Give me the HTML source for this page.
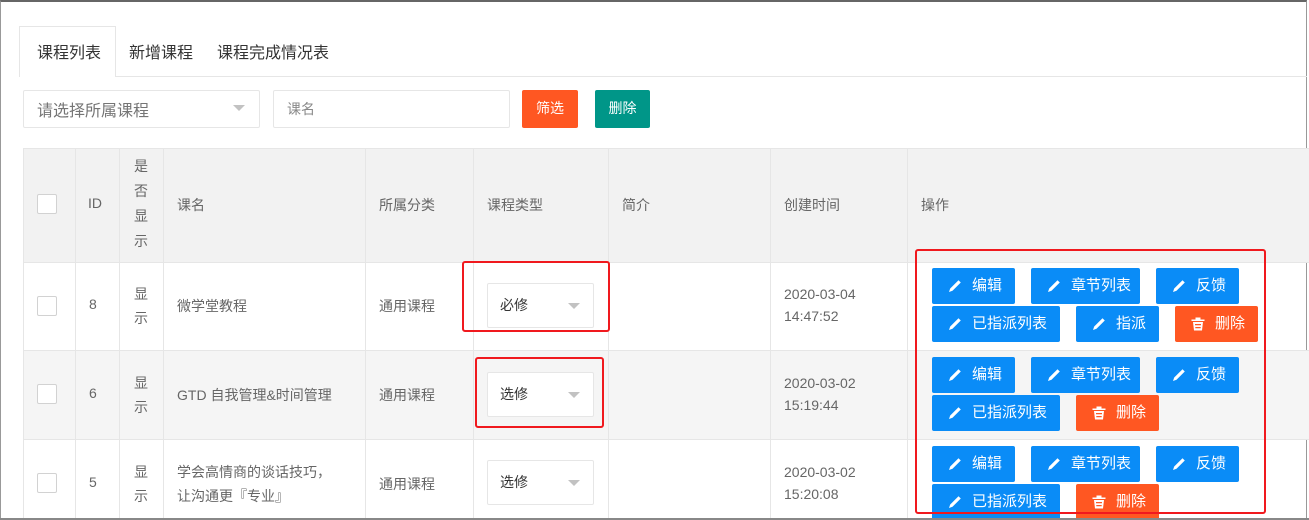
<!DOCTYPE html>
<html><head><meta charset="utf-8"><style>
*{margin:0;padding:0;box-sizing:border-box}
body{width:1309px;height:520px;overflow:hidden;background:#fff;font-family:"Liberation Sans","Noto Sans CJK SC",sans-serif;color:#666;font-size:14px;position:relative}
.a{position:absolute}
.frame{left:0;top:0;width:1307px;height:519px;border:1px solid #999;border-top:2px solid #666}
.t{position:absolute;white-space:nowrap}
.vl{position:absolute;width:1px;background:#e6e6e6}
.hl{position:absolute;height:1px;background:#e6e6e6}
.btn{position:absolute;height:36px;background:#0a8cf7;color:#fff;border-radius:2px;font-size:15px;line-height:36px;padding-left:40px;white-space:nowrap}
.btn.o{background:#ff5722}
.btn svg{position:absolute;left:15px;top:10px}
.sel{position:absolute;width:107px;height:45px;border:1px solid #e6e6e6;border-radius:2px;background:#fff;color:#333;line-height:43px;padding-left:12px}
.sel:after{content:"";position:absolute;right:13px;top:19px;border:6px solid transparent;border-top:6px solid #c2c2c2}
.cb{position:absolute;width:20px;height:20px;border:1px solid #d2d2d2;border-radius:2px;background:#fff}
.red{position:absolute;border:2px solid #f0191e;border-radius:3px}
</style></head><body>
<div class="a frame"></div>
<div class="hl" style="left:19px;top:76px;width:1288px"></div>
<div class="a" style="left:19px;top:26px;width:97px;height:51px;border:1px solid #e6e6e6;border-bottom:none;background:#fff"></div>
<div class="t" style="left:37px;top:39px;font-size:16px;color:#333">课程列表</div>
<div class="t" style="left:129px;top:39px;font-size:16px;color:#333">新增课程</div>
<div class="t" style="left:217px;top:39px;font-size:16px;color:#333">课程完成情况表</div>
<div class="a" style="left:23px;top:90px;width:237px;height:38px;border:1px solid #e6e6e6;border-radius:2px"></div>
<div class="t" style="left:37px;top:97px;font-size:16px;color:#757575">请选择所属课程</div>
<div class="a" style="left:233px;top:105px;border:6px solid transparent;border-top:6px solid #c2c2c2"></div>
<div class="a" style="left:273px;top:90px;width:237px;height:38px;border:1px solid #e6e6e6;border-radius:2px"></div>
<div class="t" style="left:287px;top:99px;color:#888">课名</div>
<div class="a" style="left:522px;top:90px;width:56px;height:38px;background:#ff5722;border-radius:2px;color:#fff;line-height:36px;text-align:center">筛选</div>
<div class="a" style="left:595px;top:90px;width:55px;height:38px;background:#009688;border-radius:2px;color:#fff;line-height:36px;text-align:center">删除</div>
<div class="a" style="left:23px;top:148px;width:1286px;height:114px;background:#f2f2f2"></div>
<div class="a" style="left:23px;top:350px;width:1286px;height:89px;background:#f5f5f5"></div>
<div class="hl" style="left:23px;top:148px;width:1286px"></div>
<div class="hl" style="left:23px;top:262px;width:1286px"></div>
<div class="hl" style="left:23px;top:350px;width:1286px"></div>
<div class="hl" style="left:23px;top:439px;width:1286px"></div>
<div class="vl" style="left:23px;top:148px;height:372px"></div>
<div class="vl" style="left:75px;top:148px;height:372px"></div>
<div class="vl" style="left:119px;top:148px;height:372px"></div>
<div class="vl" style="left:163px;top:148px;height:372px"></div>
<div class="vl" style="left:365px;top:148px;height:372px"></div>
<div class="vl" style="left:473px;top:148px;height:372px"></div>
<div class="vl" style="left:608px;top:148px;height:372px"></div>
<div class="vl" style="left:770px;top:148px;height:372px"></div>
<div class="vl" style="left:907px;top:148px;height:372px"></div>
<div class="cb" style="left:37px;top:194px"></div>
<div class="t" style="left:88px;top:195px">ID</div>
<div class="t" style="left:134px;top:154px;line-height:25px;white-space:normal;width:16px">是否显示</div>
<div class="t" style="left:177px;top:195px">课名</div>
<div class="t" style="left:379px;top:195px">所属分类</div>
<div class="t" style="left:487px;top:195px">课程类型</div>
<div class="t" style="left:622px;top:195px">简介</div>
<div class="t" style="left:784px;top:195px">创建时间</div>
<div class="t" style="left:921px;top:195px">操作</div>
<div class="cb" style="left:37px;top:296px"></div>
<div class="t" style="left:89px;top:296px">8</div>
<div class="t" style="left:134px;top:282px;line-height:24px;white-space:normal;width:16px">显示</div>
<div class="t" style="left:177px;top:296px">微学堂教程</div>
<div class="t" style="left:379px;top:296px">通用课程</div>
<div class="sel" style="left:487px;top:283px">必修</div>
<div class="t" style="left:784px;top:283px;line-height:22px">2020-03-04<br>14:47:52</div>
<div class="cb" style="left:37px;top:384px"></div>
<div class="t" style="left:89px;top:385px">6</div>
<div class="t" style="left:134px;top:371px;line-height:24px;white-space:normal;width:16px">显示</div>
<div class="t" style="left:177px;top:385px">GTD 自我管理&amp;时间管理</div>
<div class="t" style="left:379px;top:385px">通用课程</div>
<div class="sel" style="left:487px;top:372px">选修</div>
<div class="t" style="left:784px;top:372px;line-height:22px">2020-03-02<br>15:19:44</div>
<div class="cb" style="left:37px;top:473px"></div>
<div class="t" style="left:89px;top:474px">5</div>
<div class="t" style="left:134px;top:460px;line-height:24px;white-space:normal;width:16px">显示</div>
<div class="t" style="left:177px;top:460px;line-height:24px">学会高情商的谈话技巧，<br>让沟通更『专业』</div>
<div class="t" style="left:379px;top:474px">通用课程</div>
<div class="sel" style="left:487px;top:460px">选修</div>
<div class="t" style="left:784px;top:461px;line-height:22px">2020-03-02<br>15:20:08</div>
<svg width="0" height="0" style="position:absolute"><defs>
<symbol id="p" viewBox="0 0 16 16"><path d="M2 14 L3.2 10.5 L11.5 2.2 L13.8 4.5 L5.5 12.8 Z" fill="#fff"/></symbol>
<symbol id="d" viewBox="0 0 16 16"><path d="M1.5 3.5h13v1.5h-13z M5.5 1.5h5v2h-5z M3 6h10l-1 8.5H4z" fill="#fff"/><path d="M5 8h6v1.3H5z M5.3 11h5.4v1.3H5.3z" fill="#ff5722"/></symbol>
</defs></svg>
<div class="btn" style="left:932px;top:268px;width:83px"><svg width="16" height="16"><use href="#p"/></svg>编辑</div>
<div class="btn" style="left:1031px;top:268px;width:109px"><svg width="16" height="16"><use href="#p"/></svg>章节列表</div>
<div class="btn" style="left:1156px;top:268px;width:83px"><svg width="16" height="16"><use href="#p"/></svg>反馈</div>
<div class="btn" style="left:932px;top:306px;width:128px"><svg width="16" height="16"><use href="#p"/></svg>已指派列表</div>
<div class="btn" style="left:1076px;top:306px;width:83px"><svg width="16" height="16"><use href="#p"/></svg>指派</div>
<div class="btn o" style="left:1175px;top:306px;width:83px"><svg width="16" height="16"><use href="#d"/></svg>删除</div>
<div class="btn" style="left:932px;top:357px;width:83px"><svg width="16" height="16"><use href="#p"/></svg>编辑</div>
<div class="btn" style="left:1031px;top:357px;width:109px"><svg width="16" height="16"><use href="#p"/></svg>章节列表</div>
<div class="btn" style="left:1156px;top:357px;width:83px"><svg width="16" height="16"><use href="#p"/></svg>反馈</div>
<div class="btn" style="left:932px;top:395px;width:128px"><svg width="16" height="16"><use href="#p"/></svg>已指派列表</div>
<div class="btn o" style="left:1076px;top:395px;width:83px"><svg width="16" height="16"><use href="#d"/></svg>删除</div>
<div class="btn" style="left:932px;top:446px;width:83px"><svg width="16" height="16"><use href="#p"/></svg>编辑</div>
<div class="btn" style="left:1031px;top:446px;width:109px"><svg width="16" height="16"><use href="#p"/></svg>章节列表</div>
<div class="btn" style="left:1156px;top:446px;width:83px"><svg width="16" height="16"><use href="#p"/></svg>反馈</div>
<div class="btn" style="left:932px;top:484px;width:128px"><svg width="16" height="16"><use href="#p"/></svg>已指派列表</div>
<div class="btn o" style="left:1076px;top:484px;width:83px"><svg width="16" height="16"><use href="#d"/></svg>删除</div>
<div class="red" style="left:462px;top:261px;width:148px;height:71px"></div>
<div class="red" style="left:475px;top:357px;width:129px;height:71px"></div>
<div class="red" style="left:915px;top:249px;width:351px;height:265px"></div>
<div class="a" style="left:0;top:518px;width:1309px;height:2px;background:#888"></div>
</body></html>
